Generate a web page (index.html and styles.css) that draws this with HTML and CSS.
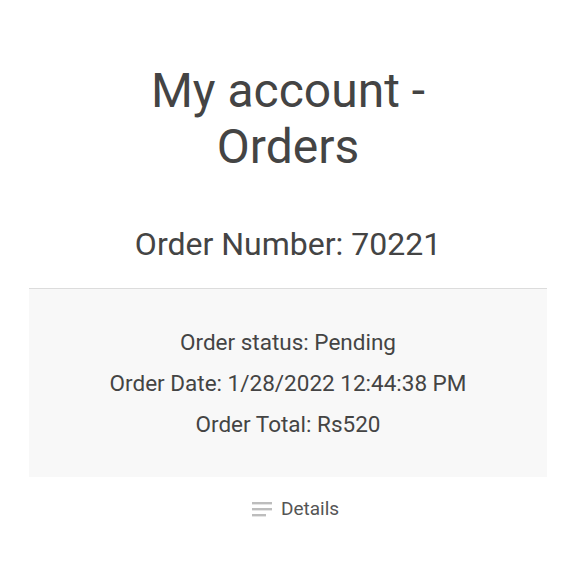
FILE: index.html
```html
<!DOCTYPE html>
<html lang="en">
<head>
  <meta charset="UTF-8" />
  <meta name="viewport" content="width=device-width, initial-scale=1.0"/>
  <title>My account - Orders</title>
  <link rel="stylesheet" href="styles.css">
</head>
<body>
  <main>
    <h1>My account - Orders</h1>
    <h2 class="order-number">Order Number: 70221</h2>
    <div class="order-card">
      <p>Order status: Pending</p>
      <p>Order Date: 1/28/2022 12:44:38 PM</p>
      <p>Order Total: Rs520</p>
    </div>
    <a class="details" href="#">
      <svg class="details-icon" width="21" height="16" viewBox="0 0 21 16">
        <rect x="0" y="1" width="20" height="2.4" fill="#bdbdbd"/>
        <rect x="0" y="7" width="20" height="2.4" fill="#bdbdbd"/>
        <rect x="0" y="13" width="14" height="2.4" fill="#bdbdbd"/>
      </svg>
      <span>Details</span>
    </a>
  </main>
</body>
</html>
```

FILE: styles.css
```css
* {
  margin: 0;
  padding: 0;
  box-sizing: border-box;
}
body {
  background-color: white;
  color: #444;
  font-family: Roboto, "Liberation Sans", sans-serif;
  text-align: center;
}
h1 {
  font-size: 48px;
  font-weight: 400;
  line-height: 56px;
  max-width: 340px;
  margin: 63px auto 0;
}
.order-number {
  font-size: 32px;
  font-weight: 400;
  line-height: 38px;
  margin-top: 50px;
}
.order-card {
  margin: 25px 29px 0;
  padding: 33px 0 32px;
  background-color: #f8f8f8;
  border-top: 1px solid #dcdcdc;
}
.order-card p {
  font-size: 22.5px;
  line-height: 41px;
}
.details {
  display: flex;
  justify-content: center;
  align-items: center;
  gap: 8px;
  margin-top: 20px;
  padding-left: 15px;
  font-size: 19px;
  color: #555;
  text-decoration: none;
}
.details-icon {
  display: block;
}
```
